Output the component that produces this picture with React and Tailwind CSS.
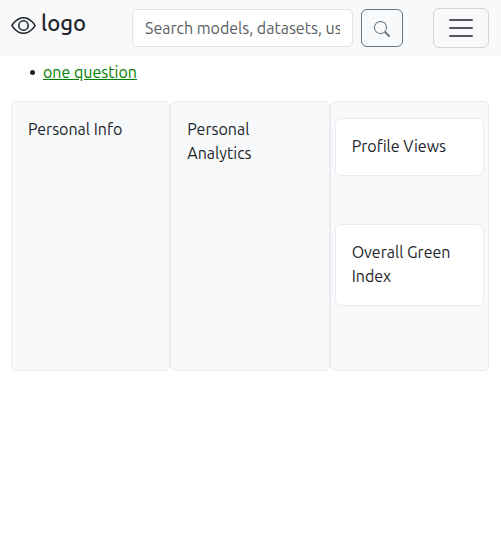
import { BsEye, BsSearch } from 'react-icons/bs';

function Panel({ children, className = '' }) {
  return (
    <div className={`h-[270px] w-1/3 rounded-md border border-[#e9ebee] bg-[#f8f9fb] ${className}`}>
      {children}
    </div>
  );
}

function StatCard({ children }) {
  return (
    <div className="rounded-md border border-[#e9ebee] bg-white px-4 pb-[17px] pt-[15px] leading-6">
      {children}
    </div>
  );
}

export default function App() {
  return (
    <div className="min-h-[545px] bg-white font-['Ubuntu','Noto_Sans',sans-serif] text-base text-[#212529]">
      <nav className="flex h-14 items-start bg-[#f8f9fb] pl-[11px]">
        <a className="flex w-[121px] items-start">
          <BsEye className="mt-[13px] size-[25px] shrink-0" />
          <span className="ml-[5px] mt-2 text-[22px] font-medium leading-[30px]">logo</span>
        </a>
        <input
          className="mt-[9px] h-[38px] w-[221px] rounded-md border border-[#dee2e6] bg-white px-3 text-base outline-none placeholder:text-[#5a5f64]"
          placeholder="Search models, datasets, users..."
        />
        <button className="ml-2 mt-[9px] flex h-[38px] w-[42px] items-center justify-center rounded-md border border-[#6c757d] text-[#6c757d]">
          <BsSearch className="mt-0.5 size-4" />
        </button>
        <button className="ml-[30px] mt-2 flex h-10 w-14 items-center justify-center rounded-md border border-[#d3d4d6]">
          <svg viewBox="0 0 30 30" className="size-[30px]" fill="none" stroke="#54575c" strokeWidth="2" strokeLinecap="round">
            <path d="M4 7h22M4 15h22M4 23h22" />
          </svg>
        </button>
      </nav>
      <ul className="flex h-[45px] items-start pl-[30px] pt-1">
        <li className="flex items-center leading-6">
          <span className="mr-2 mt-px size-[5px] rounded-full bg-[#212529]" />
          <a className="text-[#008000] underline">one question</a>
        </li>
      </ul>
      <main className="flex px-[11px] pr-3">
        <Panel className="px-4 pt-[15px] leading-6">Personal Info</Panel>
        <Panel className="px-4 pt-[15px] leading-6">Personal Analytics</Panel>
        <Panel className="flex flex-col gap-12 px-1 py-4">
          <StatCard>Profile Views</StatCard>
          <StatCard>Overall Green Index</StatCard>
        </Panel>
      </main>
    </div>
  );
}
